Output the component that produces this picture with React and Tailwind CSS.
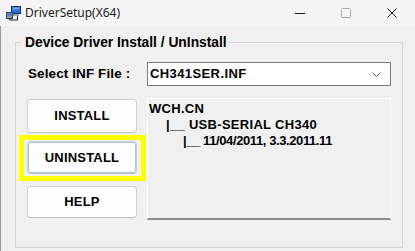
import React from "react";

function AppIcon() {
  return (
    <svg width="16" height="16" viewBox="0 0 16 16">
      <rect x="6.5" y="1.5" width="9" height="7" fill="#2b6de0" stroke="#1b2f5c" />
      <rect x="7.5" y="2.5" width="7" height="2" fill="#6fa2f5" />
      <rect x="8" y="9" width="6" height="2" fill="#9aa1aa" />
      <rect x="1.5" y="7.5" width="6" height="6" fill="#8a95a3" stroke="#38414d" />
      <rect x="2.5" y="8.5" width="4" height="2" fill="#3a78d8" />
      <path d="M4.5 13.5 V15 H12.5 V11" fill="none" stroke="#222" strokeWidth="1" />
    </svg>
  );
}

function Btn({ children, className = "" }) {
  return (
    <button
      className={
        "w-[110px] flex items-center justify-center bg-[#fdfdfd] rounded-[4px] border border-[#d0d0d0] border-b-[#c0c0c0] text-[13px] font-bold text-black tracking-[0.2px] " +
        className
      }
    >
      {children}
    </button>
  );
}

export default function App() {
  return (
    <div className="w-[415px] h-[251px] bg-[#f0f0f0] overflow-hidden flex flex-col font-['Liberation_Sans',Arial,sans-serif] text-black">
      {/* Title bar */}
      <div className="h-[26px] shrink-0 flex items-center bg-[#f5f5f5]">
        <div className="pl-[5px] flex items-center">
          <AppIcon />
        </div>
        <span className="ml-[4px] text-[12px] font-['Noto_Sans',sans-serif] text-[#1a1a1a]">
          DriverSetup(X64)
        </span>
        <div className="ml-auto flex h-full">
          <div className="w-[46px] h-full flex items-center justify-center">
            <div className="w-[10px] h-px bg-[#1a1a1a]" />
          </div>
          <div className="w-[46px] h-full flex items-center justify-center">
            <svg width="10" height="10" viewBox="0 0 10 10">
              <rect x="0.5" y="0.5" width="9" height="9" rx="1" fill="none" stroke="#a8a8a8" />
            </svg>
          </div>
          <div className="w-[46px] h-full flex items-center justify-center">
            <svg width="10" height="10" viewBox="0 0 10 10">
              <path d="M0.5 0.5 L9.5 9.5 M9.5 0.5 L0.5 9.5" stroke="#1a1a1a" strokeWidth="1" />
            </svg>
          </div>
        </div>
      </div>

      {/* Body */}
      <div className="flex-1 border-l border-[#9a9a9a] pl-[14px]">
        <fieldset className="mt-[8px] w-[388px] h-[214px] border border-[#d6d6d6]">
          <legend className="ml-[5px] pl-[4px] pr-[2px] text-[13.8px] leading-[17px] font-bold">
            Device Driver Install / UnInstall
          </legend>

          {/* Row 1 */}
          <div className="flex items-center mt-[11px] pl-[12px]">
            <div className="w-[119px] text-[13.5px] font-bold tracking-[0.1px]">Select INF File :</div>
            <div className="w-[244px] h-[24px] bg-white border border-[#7a7a7a] flex items-center pl-[2px] pr-[9px]">
              <span className="text-[13px] font-bold tracking-[0.4px]">CH341SER.INF</span>
              <svg className="ml-auto" width="9" height="5" viewBox="0 0 9 5">
                <path d="M0.5 0.5 L4.5 4.5 L8.5 0.5" fill="none" stroke="#606060" strokeWidth="1" />
              </svg>
            </div>
          </div>

          {/* Row 2 */}
          <div className="flex mt-[12px] pl-[11px]">
            <div className="flex flex-col pt-[1px]">
              <Btn className="h-[34px]">INSTALL</Btn>
              <div className="relative mt-[8px]">
                <Btn className="h-[33px] border-[#0067c0] border-b-[#0067c0] shadow-[inset_0_0_0_1px_rgba(0,103,192,0.35)]">
                  UNINSTALL
                </Btn>
                <span className="absolute -top-[6px] -left-[8px] -right-[9px] -bottom-[7px] border-[5px] border-[#ffff00] pointer-events-none" />
              </div>
              <Btn className="h-[32px] mt-[12px]">HELP</Btn>
            </div>
            <div className="ml-[10px] w-[244px] h-[122px] border-t border-l border-r border-white border-b-2 border-b-[#8c8c8c] pt-[2px] pl-[1px] text-[13px] leading-[16px] font-bold tracking-[0.3px]">
              <div>WCH.CN</div>
              <div className="pl-[17px]">|__ USB-SERIAL CH340</div>
              <div className="pl-[34px] tracking-[-0.4px]">|__ 11/04/2011, 3.3.2011.11</div>
            </div>
          </div>
        </fieldset>
      </div>
    </div>
  );
}
